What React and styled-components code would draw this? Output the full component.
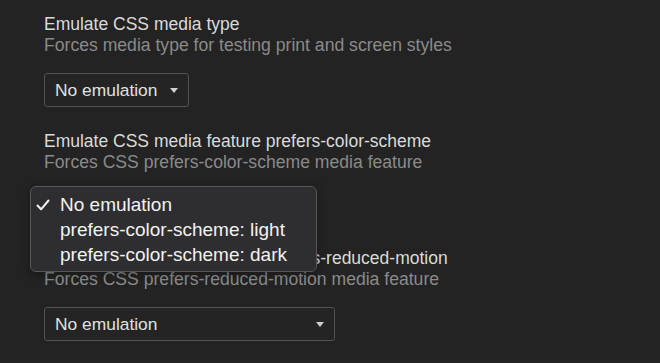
import styled, { createGlobalStyle } from 'styled-components';

const GlobalStyle = createGlobalStyle`
    html, body {
        margin: 0;
        padding: 0;
        background: #232323;
    }
    body {
        font-family: "Liberation Sans", Arial, sans-serif;
    }
`;

const settings = [
    {
        title: 'Emulate CSS media type',
        description: 'Forces media type for testing print and screen styles',
        value: 'No emulation',
        width: 145,
    },
    {
        title: 'Emulate CSS media feature prefers-color-scheme',
        description: 'Forces CSS prefers-color-scheme media feature',
        value: 'No emulation',
        width: 270,
        open: true,
    },
    {
        title: 'Emulate CSS media feature prefers-reduced-motion',
        description: 'Forces CSS prefers-reduced-motion media feature',
        value: 'No emulation',
        width: 291,
    },
];

const options = ['No emulation', 'prefers-color-scheme: light', 'prefers-color-scheme: dark'];

const Caret = () => (
    <svg width="8" height="5" viewBox="0 0 8 5">
        <path d="M0 0h8L4 5z" fill="#cfcfcf" />
    </svg>
);

const Check = () => (
    <svg width="14" height="12" viewBox="0 0 14 12">
        <path d="M1.5 6.5l3.6 3.8L12.5 1.5" fill="none" stroke="#f2f2f2" strokeWidth="2" strokeLinecap="round" strokeLinejoin="round" />
    </svg>
);

const App = () => {
    return (
        <Page>
            <GlobalStyle />
            {settings.map((s) => (
                <Section key={s.title}>
                    <Title>{s.title}</Title>
                    <Description>{s.description}</Description>
                    <SelectWrap>
                        <Select $width={s.width}>
                            <span>{s.value}</span>
                            <Caret />
                        </Select>
                        {s.open && (
                            <Menu>
                                {options.map((o, i) => (
                                    <Item key={o}>
                                        <Mark>{i === 0 && <Check />}</Mark>
                                        {o}
                                    </Item>
                                ))}
                            </Menu>
                        )}
                    </SelectWrap>
                </Section>
            ))}
        </Page>
    )
}

const Page = styled.div`
    padding: 14px 0 0 44px;
    height: 363px;
    box-sizing: border-box;
    overflow: hidden;
`;

const Section = styled.div`
    display: flex;
    flex-direction: column;
    align-items: flex-start;
    margin-bottom: 24px;
`;

const Title = styled.div`
    font-size: 17.5px;
    line-height: 21px;
    color: #dadada;
`;

const Description = styled.div`
    font-size: 17.6px;
    line-height: 21px;
    color: #8a8a8a;
    margin-bottom: 17px;
`;

const SelectWrap = styled.div`
    position: relative;
`;

const Select = styled.div`
    width: ${(p) => p.$width}px;
    height: 34px;
    box-sizing: border-box;
    display: flex;
    align-items: center;
    justify-content: space-between;
    padding: 0 10px 0 10px;
    border: 1px solid #515151;
    border-radius: 3px;
    background: #242424;
    font-size: 17.4px;
    color: #e0e0e0;
`;

const Menu = styled.div`
    position: absolute;
    top: -4px;
    left: -14px;
    width: 287px;
    height: 86px;
    box-sizing: border-box;
    padding: 5px 0 0;
    background: #2e2e30;
    border: 1px solid #57575a;
    border-radius: 6px;
    box-shadow: 0 2px 8px rgba(0, 0, 0, 0.35);
`;

const Item = styled.div`
    display: flex;
    align-items: center;
    height: 25px;
    font-size: 19px;
    color: #f2f2f2;
`;

const Mark = styled.span`
    width: 29px;
    display: flex;
    padding-left: 5px;
    box-sizing: border-box;
`;

export default App
